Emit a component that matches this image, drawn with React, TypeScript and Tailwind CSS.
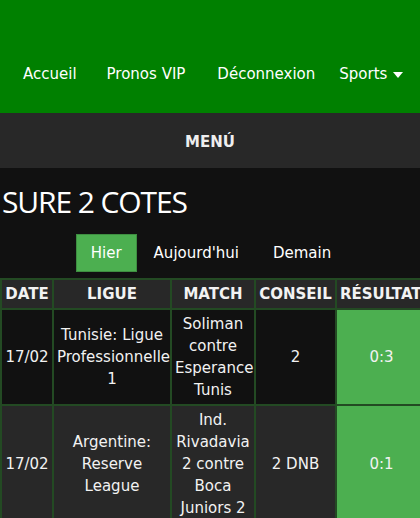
import React, { useState } from 'react';

type Prono = {
    date: string;
    ligue: string[];
    match: string[];
    conseil: string;
    resultat: string;
};

const pronos: Prono[] = [
    {
        date: '17/02',
        ligue: ['Tunisie: Ligue', 'Professionnelle', '1'],
        match: ['Soliman', 'contre', 'Esperance', 'Tunis'],
        conseil: '2',
        resultat: '0:3',
    },
    {
        date: '17/02',
        ligue: ['Argentine:', 'Reserve', 'League'],
        match: ['Ind.', 'Rivadavia', '2 contre', 'Boca', 'Juniors 2'],
        conseil: '2 DNB',
        resultat: '0:1',
    },
];

const tabs = ['Hier', "Aujourd'hui", 'Demain'];

const cell = 'border-2 border-[#234a23] px-[3px] py-[3px] text-center align-middle';

const App: React.FC = () => {
    const [tab, setTab] = useState('Hier');

    return (
        <div className="min-h-screen w-full overflow-hidden bg-[#111111] text-[15px] leading-[22px] text-white font-['DejaVu_Sans',sans-serif]">
            {/* barre verte */}
            <header className="h-[113px] bg-[#008000] pt-[63px]">
                <nav className="flex items-center pl-[23px]">
                    <a className="mr-[30px]">Accueil</a>
                    <a className="mr-[32px]">Pronos VIP</a>
                    <a className="mr-[24px]">Déconnexion</a>
                    <a className="flex items-center gap-[6px]">
                        Sports
                        <svg width="10" height="6" viewBox="0 0 10 6" className="mt-[1px]">
                            <path d="M0 0h10L5 6z" fill="#fff" />
                        </svg>
                    </a>
                </nav>
            </header>

            <div className="flex h-[55px] items-center justify-center bg-[#282828] pt-[3px]">
                <span className="text-[15px] font-bold text-[#eeeeee]">MENÚ</span>
            </div>

            <h1 className="mt-[16px] pl-[2px] text-[30px] leading-[36px] tracking-[-1.1px] font-['Open_Sans',sans-serif]">
                SURE 2 COTES
            </h1>

            <div className="mt-[14px] flex justify-center pl-[4px]">
                {tabs.map((t) => (
                    <button
                        key={t}
                        onClick={() => setTab(t)}
                        className={`h-[38px] ${tab === t ? 'border border-[#3e8e41] bg-[#4caf50] px-[14px]' : 'border border-transparent px-4'}`}
                    >
                        {t}
                    </button>
                ))}
            </div>

            <table className="mt-[6px] w-[426px] table-fixed border-collapse text-[#f2f2f2]">
                <colgroup>
                    <col className="w-[52px]" />
                    <col className="w-[118px]" />
                    <col className="w-[84px]" />
                    <col className="w-[81px]" />
                    <col className="w-[91px]" />
                </colgroup>
                <thead>
                    <tr className="bg-[#282828] font-bold">
                        <th className={cell}>DATE</th>
                        <th className={cell}>LIGUE</th>
                        <th className={cell}>MATCH</th>
                        <th className={cell}>CONSEIL</th>
                        <th className={`${cell} whitespace-nowrap text-left`}>RÉSULTAT</th>
                    </tr>
                </thead>
                <tbody>
                    {pronos.map((p, i) => (
                        <tr key={i} className={i % 2 === 0 ? 'bg-[#111111]' : 'bg-[#282828]'}>
                            <td className={cell}>{p.date}</td>
                            <td className={cell}>
                                {p.ligue.map((l) => (
                                    <div key={l}>{l}</div>
                                ))}
                            </td>
                            <td className={cell}>
                                {p.match.map((m) => (
                                    <div key={m}>{m}</div>
                                ))}
                            </td>
                            <td className={cell}>{p.conseil}</td>
                            <td className={`${cell} bg-[#4caf50]`}>{p.resultat}</td>
                        </tr>
                    ))}
                </tbody>
            </table>
        </div>
    );
};

export default App;
